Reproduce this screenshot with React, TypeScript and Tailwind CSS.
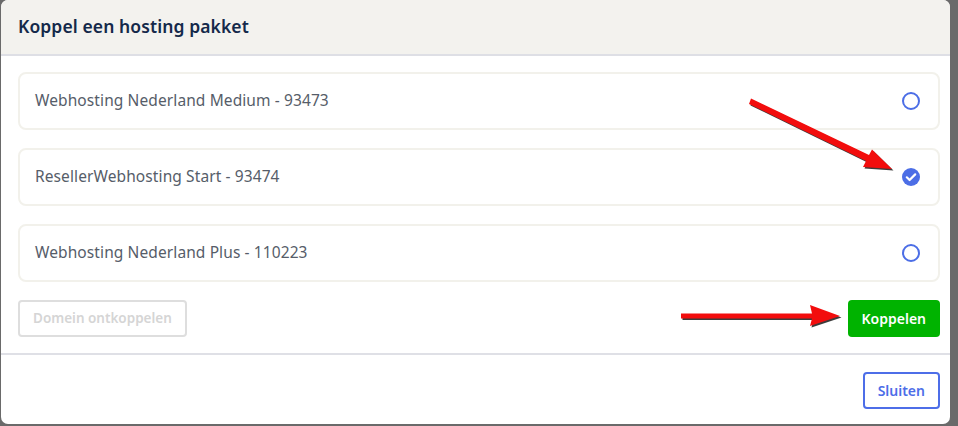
import { useState } from 'react';

const packages = [
  { id: 93473, name: 'Webhosting Nederland Medium' },
  { id: 93474, name: 'ResellerWebhosting Start' },
  { id: 110223, name: 'Webhosting Nederland Plus' },
];

function Radio({ checked }: { checked: boolean }) {
  if (checked) {
    return (
      <svg width="20" height="20" viewBox="0 0 20 20">
        <circle cx="10" cy="10" r="9" fill="#4c6ee6" />
        <path
          d="M5.8 10.3l2.8 2.7 5.6-5.6"
          fill="none"
          stroke="#fff"
          strokeWidth="2.2"
          strokeLinecap="round"
          strokeLinejoin="round"
        />
      </svg>
    );
  }
  return (
    <svg width="20" height="20" viewBox="0 0 20 20">
      <circle cx="10" cy="10" r="8" fill="#fff" stroke="#4c6ee6" strokeWidth="2" />
    </svg>
  );
}

function Arrows() {
  return (
    <svg
      className="pointer-events-none absolute inset-0"
      width="958"
      height="426"
      viewBox="0 0 958 426"
    >
      <g transform="translate(1.5,1.5)" fill="#1a1a1a" opacity="0.85">
        <path d="M751 98.5 L869 155 L872 149.5 L892 169 L863 167 L866 161 L749 104 Z" />
        <path d="M681 313.5 L812 313.5 L810 305 L840 316 L810 326 L812 318.5 L681 318.5 Z" />
      </g>
      <g fill="#f20d0d">
        <path d="M751 98.5 L869 155 L872 149.5 L892 169 L863 167 L866 161 L749 104 Z" />
        <path d="M681 313.5 L812 313.5 L810 305 L840 316 L810 326 L812 318.5 L681 318.5 Z" />
      </g>
    </svg>
  );
}

export default function App() {
  const [selected, setSelected] = useState(93474);

  return (
    <div
      className="relative h-[426px] w-[958px] overflow-hidden bg-[#6a6a6a]"
      style={{ fontFamily: '"Noto Sans", "Open Sans", sans-serif' }}
    >
      <div className="ml-[1px] flex h-[424px] w-[949px] flex-col overflow-hidden rounded-[7px] bg-white">
        <div className="flex h-[56px] shrink-0 items-center border-b-2 border-[#dedfe5] bg-[#f3f2ee] pl-[17px] pb-[2px]">
          <h1 className="text-[17.5px] font-semibold tracking-[0.1px] text-[#14294a]">
            Koppel een hosting pakket
          </h1>
        </div>

        <div className="flex flex-col gap-[18px] pl-[17px] pr-[10px] pt-[16px]">
          {packages.map((p) => (
            <button
              key={p.id}
              onClick={() => setSelected(p.id)}
              className="flex h-[58px] items-center justify-between rounded-[8px] border-2 border-[#f2f1eb] pl-[15px] pr-[17px] text-left"
            >
              <span className="text-[15.5px] tracking-[0.1px] text-[#565d69]">
                {p.name} - {p.id}
              </span>
              <Radio checked={selected === p.id} />
            </button>
          ))}
        </div>

        <div className="flex items-center justify-between border-b-2 border-[#dfe0e6] pl-[17px] pr-[10px] pt-[18px] pb-[16px]">
          <button className="h-[37px] rounded-[4px] border-2 border-[#dedede] px-[13px] text-[13.5px] font-semibold text-[#d5d5d5]">
            Domein ontkoppelen
          </button>
          <button className="h-[37px] rounded-[4px] bg-[#00b300] px-[14px] text-[14px] font-semibold text-white">
            Koppelen
          </button>
        </div>

        <div className="flex justify-end pr-[10px] pt-[17px]">
          <button className="h-[37px] rounded-[4px] border-2 border-[#4d6ee8] px-[13px] text-[14px] font-semibold text-[#4d6ee8]">
            Sluiten
          </button>
        </div>
      </div>
      <Arrows />
    </div>
  );
}
